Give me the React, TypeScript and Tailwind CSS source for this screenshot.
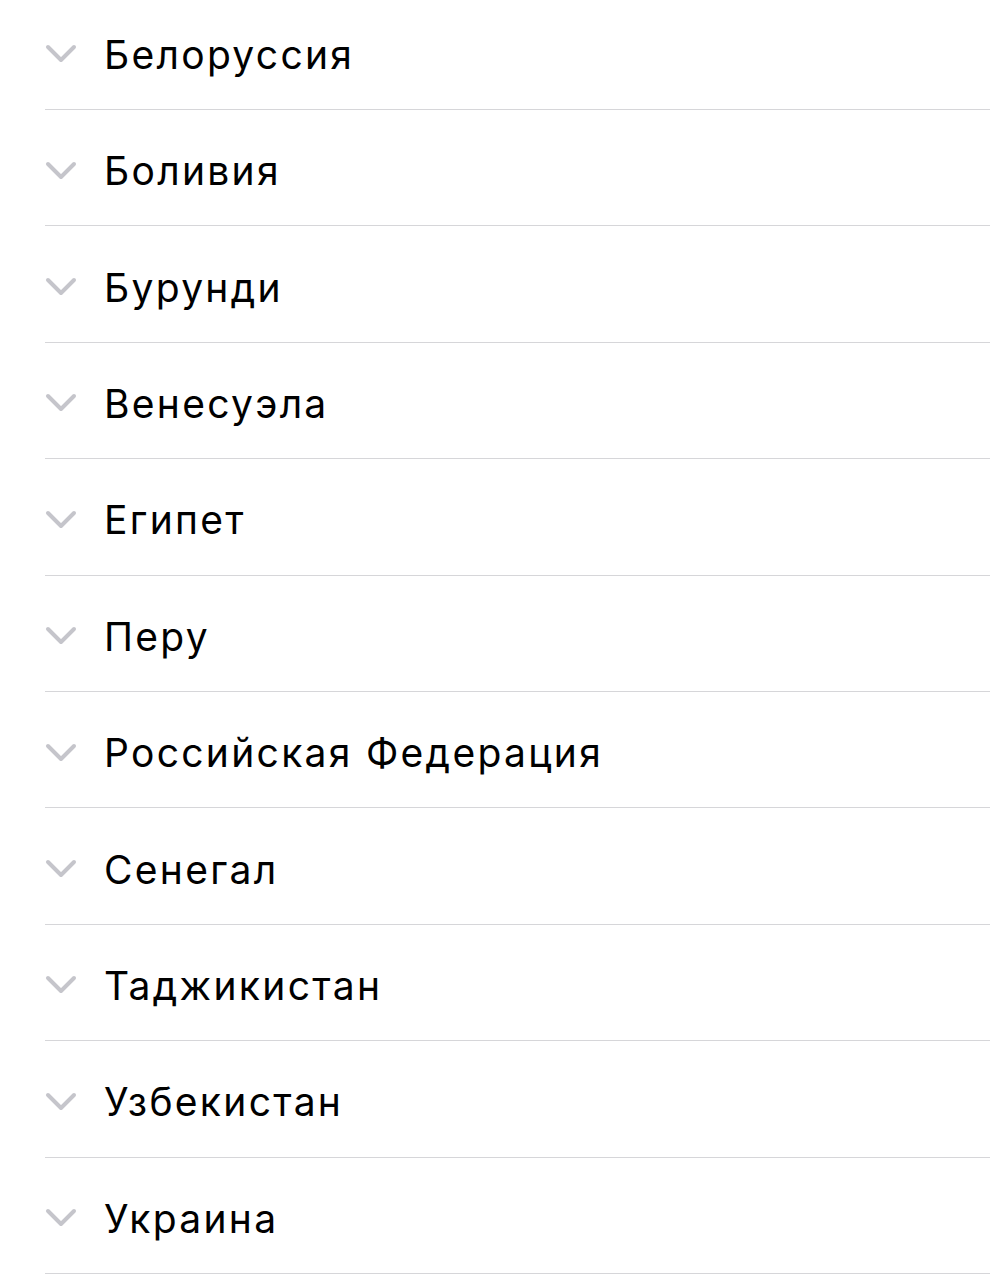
import React from "react";

const items = [
  "Белоруссия",
  "Боливия",
  "Бурунди",
  "Венесуэла",
  "Египет",
  "Перу",
  "Российская Федерация",
  "Сенегал",
  "Таджикистан",
  "Узбекистан",
  "Украина",
];

function Chevron() {
  return (
    <svg width="32" height="20" viewBox="0 0 32 20" className="shrink-0">
      <path
        d="M3 3 L16 16 L29 3"
        fill="none"
        stroke="#c5c5cb"
        strokeWidth="4"
        strokeLinecap="round"
        strokeLinejoin="round"
      />
    </svg>
  );
}

export default function App() {
  return (
    <div className="w-[990px] h-[1280px] overflow-hidden bg-white font-['Inter',sans-serif]">
      <div className="mt-[-6.4px] pl-[45px]">
        {items.map((name) => (
          <div
            key={name}
            className="h-[116.4px] flex items-center border-b-[1.5px] border-[#d6d6d9] pt-[6px]"
          >
            <div className="w-[59px] flex items-center">
              <Chevron />
            </div>
            <span className="text-[39px] leading-none text-black tracking-[2.3px]">
              {name}
            </span>
          </div>
        ))}
      </div>
    </div>
  );
}
